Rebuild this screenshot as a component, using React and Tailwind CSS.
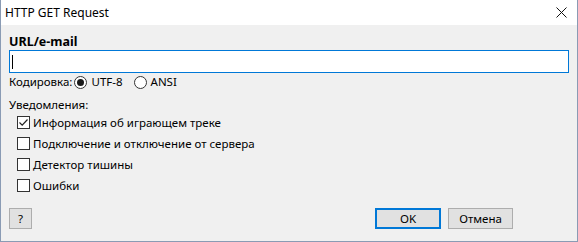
import { useState } from 'react'

function CheckBox({ checked, label }) {
  return (
    <label className="flex items-center h-[21px]">
      <span className="w-[13px] h-[13px] border border-[#333333] bg-white flex items-center justify-center">
        {checked && (
          <svg width="11" height="11" viewBox="0 0 11 11">
            <path d="M1.5 5.5 L4.2 8.2 L9.5 2.5" fill="none" stroke="#222" strokeWidth="1.2" />
          </svg>
        )}
      </span>
      <span className="ml-[3px]">{label}</span>
    </label>
  )
}

function Radio({ checked, label }) {
  return (
    <span className="flex items-center">
      <span className="w-[13px] h-[13px] rounded-full border border-[#333333] bg-white flex items-center justify-center">
        {checked && <span className="w-[7px] h-[7px] rounded-full bg-[#1a1a1a]" />}
      </span>
      <span className="ml-[4px]">{label}</span>
    </span>
  )
}

export default function App() {
  const [url, setUrl] = useState('')

  return (
    <div
      className="w-[578px] h-[242px] bg-[#f0f0f0] border-x border-b border-[#8a9bb4] flex flex-col text-[11.5px] text-black"
      style={{ fontFamily: '"Noto Sans", "Open Sans", sans-serif' }}
    >
      <div className="h-[25px] bg-white flex items-center justify-between pl-[4px] pr-[10px] text-[12px]">
        <span>HTTP GET Request</span>
        <svg width="11" height="11" viewBox="0 0 11 11">
          <path d="M0.5 0.5 L10.5 10.5 M10.5 0.5 L0.5 10.5" stroke="#111" strokeWidth="1" />
        </svg>
      </div>

      <div className="px-[8px] flex flex-col flex-1">
        <div className="mt-[9px] h-[16px] leading-[16px] font-bold text-[12.5px]">URL/e-mail</div>
        <div className="h-[23px] w-[560px] border border-[#0078d7] bg-white flex items-center pl-[2px]">
          <span className="w-px h-[14px] bg-black" />
          <input
            value={url}
            onChange={(e) => setUrl(e.target.value)}
            className="flex-1 h-full bg-transparent outline-none"
          />
        </div>
        <div className="h-[16px] leading-[16px] mt-[1px] flex items-center">
          <span className="mr-[2px]">Кодировка:</span>
          <Radio checked label="UTF-8" />
          <span className="w-[11px]" />
          <Radio label="ANSI" />
        </div>
        <div className="mt-[7px] h-[16px] leading-[16px]">Уведомления:</div>
        <div className="pl-[8px] flex flex-col -mt-[1px]">
          <CheckBox checked label="Информация об играющем треке" />
          <CheckBox label="Подключение и отключение от сервера" />
          <CheckBox label="Детектор тишины" />
          <CheckBox label="Ошибки" />
        </div>

        <div className="mt-auto mb-[12px] flex items-center">
          <button className="w-[23px] h-[21px] bg-[#e1e1e1] border border-[#adadad]">?</button>
          <div className="flex-1" />
          <button className="w-[66px] h-[21px] bg-[#e1e1e1] border-2 border-[#0078d7]">OK</button>
          <button className="ml-[7px] w-[65px] h-[21px] bg-[#e1e1e1] border border-[#adadad]">Отмена</button>
          <span className="w-[56px]" />
        </div>
      </div>
    </div>
  )
}
